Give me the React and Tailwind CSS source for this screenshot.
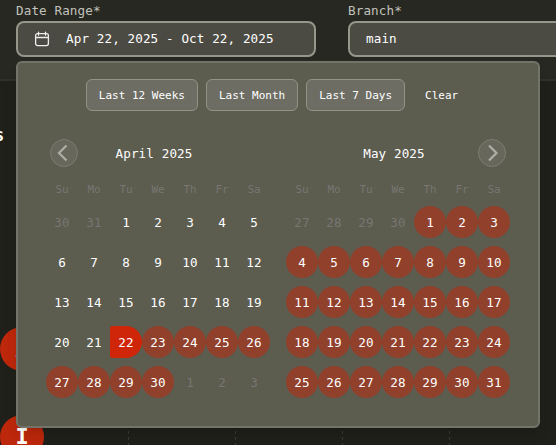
import React from "react";

const WEEKDAYS = ["Su", "Mo", "Tu", "We", "Th", "Fr", "Sa"];

function range(from, to, kind) {
  return Array.from({ length: to - from + 1 }, (_, i) => ({ day: from + i, kind }));
}

const APRIL = [
  ...range(30, 31, "outside"),
  ...range(1, 21, "plain"),
  ...range(22, 22, "start"),
  ...range(23, 30, "selected"),
  ...range(1, 3, "outside"),
];

const MAY = [...range(27, 30, "outside"), ...range(1, 31, "selected")];

const DAY_STYLES = {
  outside: "text-[#777772]",
  plain: "text-white",
  start: "rounded-l-[2px] rounded-r-[16px] bg-[#cf2508] text-white",
  selected: "rounded-full bg-[#91402b] text-white",
};

function NavButton({ label, path }) {
  return (
    <button
      aria-label={label}
      className="flex size-7 shrink-0 items-center justify-center rounded-full border border-[#7c7d71] bg-[#67675b]"
    >
      <svg width="26" height="26" viewBox="0 0 26 26" fill="none" stroke="#aeaea7" strokeWidth="2.2">
        <path d={path} />
      </svg>
    </button>
  );
}

function Month({ title, days, prev, next }) {
  return (
    <section className="w-56">
      <header className="flex h-7 items-center justify-between px-1">
        <div className="w-7">{prev}</div>
        <h2 className="flex-1 pt-px pr-2 text-center text-[12.6px] tracking-[0.11px] leading-5 text-white">{title}</h2>
        <div className="w-7">{next}</div>
      </header>
      <div className="mt-[13px] grid h-5 grid-cols-7 text-center text-[11px] leading-5 text-[#777772]">
        {WEEKDAYS.map((d) => (
          <span key={d}>{d}</span>
        ))}
      </div>
      <div className="mt-1.5 grid grid-cols-7 gap-y-2">
        {days.map(({ day, kind }, i) => (
          <button
            key={i}
            className={`flex size-8 items-center justify-center pt-0.5 text-[12.6px] tracking-[0.11px] leading-5 ${DAY_STYLES[kind]}`}
          >
            {day}
          </button>
        ))}
      </div>
    </section>
  );
}

function Preset({ children }) {
  return (
    <button className="h-8 rounded-md border border-[#929387] bg-[#6d6d63] px-3 pt-px text-[11px] leading-4 whitespace-nowrap text-white">
      {children}
    </button>
  );
}

function Field({ label, width, children }) {
  return (
    <div className={`shrink-0 ${width}`}>
      <div className="h-[21px] text-[12.6px] tracking-[0.11px] leading-[21px] text-[#c2c2bc]">{label}</div>
      <div className="flex h-9 items-center rounded-lg border-2 border-[#96978b] bg-[#4b4b43] px-4 text-[12.6px] tracking-[0.11px] whitespace-nowrap text-white">
        {children}
      </div>
    </div>
  );
}

function CalendarIcon() {
  return (
    <svg className="mr-4 shrink-0" width="16" height="16" viewBox="0 0 16 16" fill="none" stroke="#ededeb" strokeWidth="1.3" strokeLinecap="round">
      <rect x="1.6" y="2.6" width="12.8" height="12" rx="2" />
      <path d="M1.6 6.5h12.8M4.5 1.2v3M11.5 1.2v3" />
    </svg>
  );
}

function DatePopover() {
  return (
    <div className="absolute top-[61px] left-4 h-[367px] w-[524px] rounded-md border-2 border-[#727369] bg-[#5c5c4f] px-7 pt-4 shadow-lg">
      <div className="flex justify-center gap-2">
        <Preset>Last 12 Weeks</Preset>
        <Preset>Last Month</Preset>
        <Preset>Last 7 Days</Preset>
        <button className="h-8 px-3 pt-px text-[11px] leading-4 text-white">Clear</button>
      </div>
      <div className="mt-7 flex gap-4">
        <Month
          title="April 2025"
          days={APRIL}
          prev={<NavButton label="Previous month" path="M15.5 5.5 8 13l7.5 7.5" />}
        />
        <Month
          title="May 2025"
          days={MAY}
          next={<NavButton label="Next month" path="M10 5.5 17.5 13 10 20.5" />}
        />
      </div>
    </div>
  );
}

export default function App() {
  return (
    <div className="relative flex h-[445px] w-[556px] flex-col overflow-hidden bg-[#20201b] font-['DejaVu_Sans_Mono',monospace]">
      <div className="flex h-[81px] shrink-0 gap-8 border-b-2 border-[#30302b] bg-[#282822] pl-4">
        <Field label="Date Range*" width="w-[300px]">
          <CalendarIcon />
          <span>Apr 22, 2025 - Oct 22, 2025</span>
        </Field>
        <Field label="Branch*" width="w-[300px]">
          <span>main</span>
        </Field>
      </div>
      <div className="flex flex-1">
        <div className="w-[44px] shrink-0">
          <div className="mt-[42px] h-6 text-[17px] leading-6 font-bold text-white">
            <span className="-ml-[6px]">s</span>
          </div>
          <div className="mt-[180px] flex size-[44px] items-center justify-center rounded-full bg-[#bd270b] text-[22px] font-bold text-white">
            A
          </div>
          <div className="mt-11 flex size-[44px] items-center justify-center rounded-full bg-[#bd270b] text-[22px] leading-none font-bold text-white">
            I
          </div>
        </div>
        <svg className="mt-[350px] ml-[84px] shrink-0" width="324" height="14" stroke="#393934" strokeDasharray="3 3">
          <path d="M.5 0v14M107.5 0v14M214.5 0v14M321.5 0v14" />
        </svg>
      </div>
      <DatePopover />
    </div>
  );
}
